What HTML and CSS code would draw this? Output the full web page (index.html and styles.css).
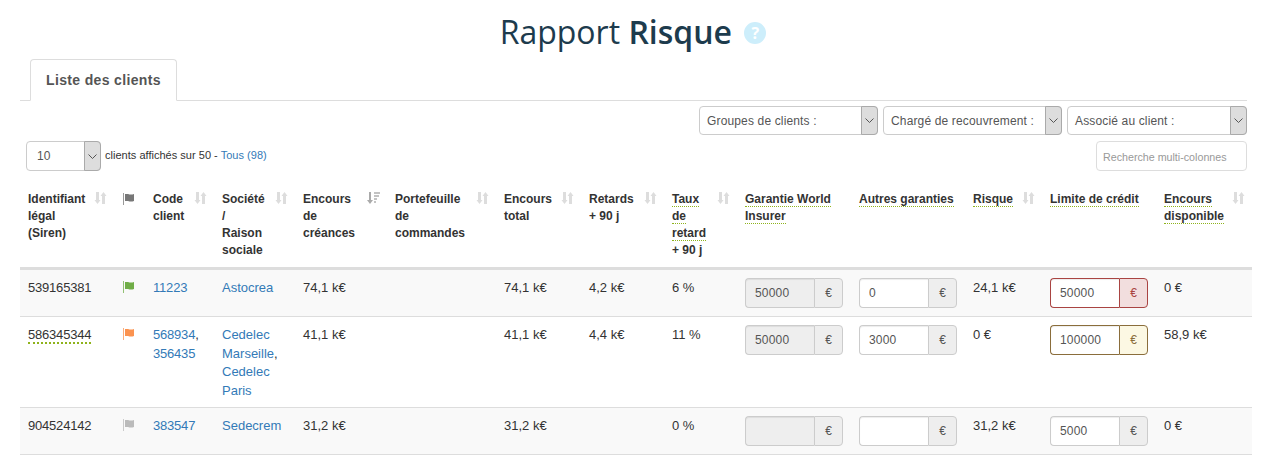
FILE: index.html
```html
<!DOCTYPE html>
<html lang="fr">
<head>
    <meta charset="UTF-8">
    <title>Rapport Risque</title>
    <link rel="stylesheet" href="styles.css">
</head>
<body>
    <svg class="defs" width="0" height="0">
        <symbol id="sort" viewBox="0 0 13 12">
            <path d="M2 0h3v8h1.500l-3 4-3-4H2zM8 12h3V4h1.500l-3-4-3 4H8z" fill="currentColor"/>
        </symbol>
        <symbol id="sort-active" viewBox="0 0 13 12">
            <path d="M2 0h2v8h2l-3 4-3-4h2z" fill="currentColor"/>
            <path d="M7 0h6v2H7zM7 3h5v2H7zM7 6h3v2H7zM7 9h2v2H7z" fill="currentColor" opacity="0.7"/>
        </symbol>
        <symbol id="flag" viewBox="0 0 13 12">
            <path d="M1 0h1v12H1z" fill="currentColor" opacity="0.75"/>
            <path d="M3 1h3l1.500 0.500h3L12 1v7l-1.500 0.500h-3L6 8H3z" fill="currentColor"/>
        </symbol>
        <symbol id="chevron" viewBox="0 0 9 5">
            <path d="M0.500 0.500l4 4 4-4" fill="none" stroke="currentColor" stroke-width="1"/>
        </symbol>
    </svg>

    <h1 class="page-title">Rapport <strong>Risque</strong> <span class="help-badge">?</span></h1>

    <div class="page">
        <div class="tabs">
            <div class="tab">Liste des clients</div>
        </div>

        <div class="filters">
            <div class="select-box"><span class="select-label">Groupes de clients :</span><span class="select-arrow"><svg><use href="#chevron"/></svg></span></div>
            <div class="select-box"><span class="select-label">Chargé de recouvrement :</span><span class="select-arrow"><svg><use href="#chevron"/></svg></span></div>
            <div class="select-box select-wide"><span class="select-label">Associé au client :</span><span class="select-arrow"><svg><use href="#chevron"/></svg></span></div>
        </div>

        <div class="toolbar">
            <div class="length">
                <div class="select-box select-small"><span class="select-label">10</span><span class="select-arrow"><svg><use href="#chevron"/></svg></span></div>
                <span class="length-text">clients affichés sur 50 - <a href="#">Tous (98)</a></span>
            </div>
            <input class="search" type="text" placeholder="Recherche multi-colonnes">
        </div>

        <table class="risk-table">
            <colgroup>
                <col class="col-siren"><col class="col-flag"><col class="col-code"><col class="col-company">
                <col class="col-due"><col class="col-orders"><col class="col-total"><col class="col-late">
                <col class="col-rate"><col class="col-amount"><col class="col-amount"><col class="col-risk">
                <col class="col-amount"><col class="col-free">
            </colgroup>
            <thead>
                <tr>
                    <th><div class="th-in"><span>Identifiant<br>légal<br>(Siren)</span><svg class="sort"><use href="#sort"/></svg></div></th>
                    <th><svg class="flag flag-head"><use href="#flag"/></svg></th>
                    <th><div class="th-in"><span>Code<br>client</span><svg class="sort"><use href="#sort"/></svg></div></th>
                    <th><div class="th-in"><span>Société<br>/<br>Raison<br>sociale</span><svg class="sort"><use href="#sort"/></svg></div></th>
                    <th><div class="th-in"><span>Encours<br>de<br>créances</span><svg class="sort sort-on"><use href="#sort-active"/></svg></div></th>
                    <th><div class="th-in"><span>Portefeuille<br>de<br>commandes</span><svg class="sort"><use href="#sort"/></svg></div></th>
                    <th><div class="th-in"><span>Encours<br>total</span><svg class="sort"><use href="#sort"/></svg></div></th>
                    <th><div class="th-in"><span>Retards<br>+ 90 j</span><svg class="sort"><use href="#sort"/></svg></div></th>
                    <th><div class="th-in"><span><span class="hint">Taux</span><br><span class="hint">de</span><br><span class="hint">retard</span><br>+ 90 j</span><svg class="sort"><use href="#sort"/></svg></div></th>
                    <th><span class="hint">Garantie World</span><br><span class="hint">Insurer</span></th>
                    <th><span class="hint">Autres garanties</span></th>
                    <th><div class="th-in"><span><span class="hint">Risque</span></span><svg class="sort"><use href="#sort"/></svg></div></th>
                    <th><span class="hint">Limite de crédit</span></th>
                    <th><div class="th-in"><span><span class="hint">Encours</span><br><span class="hint">disponible</span></span><svg class="sort"><use href="#sort"/></svg></div></th>
                </tr>
            </thead>
            <tbody>
                <tr>
                    <td class="num">539165381</td>
                    <td><svg class="flag flag-green"><use href="#flag"/></svg></td>
                    <td class="num"><a href="#">11223</a></td>
                    <td><a href="#">Astocrea</a></td>
                    <td>74,1 k€</td>
                    <td></td>
                    <td>74,1 k€</td>
                    <td>4,2 k€</td>
                    <td>6 %</td>
                    <td><div class="amount"><input value="50000" disabled><span>€</span></div></td>
                    <td><div class="amount"><input value="0"><span>€</span></div></td>
                    <td>24,1 k€</td>
                    <td><div class="amount amount-error"><input value="50000"><span>€</span></div></td>
                    <td>0 €</td>
                </tr>
                <tr>
                    <td class="num"><span class="hint-strong">586345344</span></td>
                    <td><svg class="flag flag-orange"><use href="#flag"/></svg></td>
                    <td class="num"><a href="#">568934</a>,<br><a href="#">356435</a></td>
                    <td><a href="#">Cedelec<br>Marseille</a>,<br><a href="#">Cedelec<br>Paris</a></td>
                    <td>41,1 k€</td>
                    <td></td>
                    <td>41,1 k€</td>
                    <td>4,4 k€</td>
                    <td>11 %</td>
                    <td><div class="amount"><input value="50000" disabled><span>€</span></div></td>
                    <td><div class="amount"><input value="3000"><span>€</span></div></td>
                    <td>0 €</td>
                    <td><div class="amount amount-warning"><input value="100000"><span>€</span></div></td>
                    <td>58,9 k€</td>
                </tr>
                <tr>
                    <td class="num">904524142</td>
                    <td><svg class="flag flag-grey"><use href="#flag"/></svg></td>
                    <td class="num"><a href="#">383547</a></td>
                    <td><a href="#">Sedecrem</a></td>
                    <td>31,2 k€</td>
                    <td></td>
                    <td>31,2 k€</td>
                    <td></td>
                    <td>0 %</td>
                    <td><div class="amount"><input value="" disabled><span>€</span></div></td>
                    <td><div class="amount"><input value=""><span>€</span></div></td>
                    <td>31,2 k€</td>
                    <td><div class="amount"><input value="5000"><span>€</span></div></td>
                    <td>0 €</td>
                </tr>
            </tbody>
        </table>
    </div>
</body>
</html>
```

FILE: styles.css
```css
* {
    box-sizing: border-box;
}

body {
    margin: 0;
    background: #fff;
    color: #333;
    font-family: "Liberation Sans", Arial, sans-serif;
    font-size: 13px;
    line-height: 1.42857;
}

a {
    color: #337ab7;
    text-decoration: none;
}

.defs {
    position: absolute;
}

.page-title {
    margin: 0;
    height: 59px;
    padding: 10px 1px 0 0;
    text-align: center;
    font-family: "Open Sans", sans-serif;
    font-size: 32px;
    font-weight: 400;
    line-height: 44px;
    color: #1d3b4d;
}

.page-title strong {
    font-weight: 600;
}

.help-badge {
    display: inline-block;
    width: 22px;
    height: 22px;
    margin-left: 4px;
    border-radius: 50%;
    background: #cdeefb;
    color: #fff;
    font-size: 16px;
    font-weight: 700;
    line-height: 22px;
    text-align: center;
    vertical-align: 5px;
}

.page {
    padding: 0 15px 0 20px;
}

.tabs {
    display: flex;
    height: 42px;
    margin-right: 5px;
    padding-left: 10px;
    border-bottom: 1px solid #ddd;
}

.tab {
    height: 42px;
    padding: 11px 15px 0;
    border: 1px solid #ddd;
    border-bottom-color: #fff;
    border-radius: 4px 4px 0 0;
    background: #fff;
    color: #555;
    font-size: 14px;
    font-weight: 700;
    letter-spacing: 0.35px;
}

.filters {
    display: flex;
    justify-content: flex-end;
    gap: 5px;
    margin: 5px 5px 0 0;
}

.select-box {
    display: flex;
    justify-content: space-between;
    width: 179px;
    height: 29px;
    border: 1px solid #ccc;
    border-radius: 4px;
    background: #fff;
    color: #555;
    font-size: 12px;
    line-height: 28px;
}

.select-wide {
    width: 180px;
}

.select-label {
    padding-left: 7px;
    letter-spacing: 0.15px;
}

.select-arrow {
    display: flex;
    align-items: center;
    justify-content: center;
    width: 17px;
    margin: -1px -1px -1px 0;
    border: 1px solid #aaa;
    border-radius: 0 4px 4px 0;
    background: #ddd;
    color: #555;
}

.select-arrow svg {
    width: 9px;
    height: 5px;
}

.toolbar {
    display: flex;
    justify-content: space-between;
    align-items: center;
    margin: 6px 5px 0 6px;
}

.length {
    display: flex;
    align-items: center;
    gap: 4px;
}

.select-small {
    width: 75px;
    height: 30px;
    line-height: 29px;
}

.select-small .select-label {
    padding-left: 10px;
}

.length-text {
    font-size: 11px;
    letter-spacing: 0.02px;
}

.search {
    width: 151px;
    height: 30px;
    padding: 1px 6px 0;
    border: 1px solid #ddd;
    border-radius: 4px;
    font-family: inherit;
    font-size: 10.700px;
}

.search::placeholder {
    color: #999;
}

.risk-table {
    width: 1232px;
    margin-top: 12px;
    border-collapse: collapse;
    table-layout: fixed;
}

.col-siren { width: 94px; }
.col-flag { width: 31px; }
.col-code { width: 69px; }
.col-company { width: 81px; }
.col-due { width: 92px; }
.col-orders { width: 109px; }
.col-total { width: 85px; }
.col-late { width: 83px; }
.col-rate { width: 73px; }
.col-amount { width: 114px; }
.col-risk { width: 77px; }
.col-free { width: 96px; }

.risk-table th {
    padding: 8px 0 8px 8px;
    border-bottom: 3px solid #ddd;
    font-size: 12px;
    font-weight: 700;
    line-height: 17px;
    text-align: left;
    vertical-align: top;
}

.risk-table td {
    padding: 9px 0 7px 8px;
    border-bottom: 1px solid #ddd;
    vertical-align: top;
    white-space: nowrap;
}

.risk-table td.num {
    letter-spacing: -0.2px;
}

.risk-table tbody tr:nth-child(odd) {
    background: #f9f9f9;
}

.th-in {
    display: flex;
    justify-content: space-between;
    padding-right: 7px;
}

.sort {
    flex: none;
    width: 13px;
    height: 12px;
    margin-top: 1px;
    color: #ddd;
}

.sort-on {
    color: #aaa;
}

.hint {
    border-bottom: 1px dotted #8fb31c;
}

.hint-strong {
    border-bottom: 2px dotted #8fb31c;
}

.flag {
    display: block;
    width: 13px;
    height: 12px;
    margin-top: 2px;
}

.flag-head {
    margin-top: 2px;
    color: #777;
}

.flag-green {
    color: #70ad47;
}

.flag-orange {
    color: #fb9350;
}

.flag-grey {
    color: #bbb;
}

.amount {
    display: flex;
    width: 98px;
    height: 30px;
    margin: -1px 0 1px;
}

.amount input {
    width: 69px;
    height: 30px;
    padding: 0 9px;
    border: 1px solid #ccc;
    border-right: 0;
    border-radius: 4px 0 0 4px;
    background: #fff;
    box-shadow: inset 0 1px 1px rgba(0, 0, 0, 0.075);
    color: #555;
    font-family: inherit;
    font-size: 12px;
    letter-spacing: 0.2px;
    outline: none;
}

.amount input:disabled {
    background: #eee;
    color: #555;
}

.amount span {
    width: 29px;
    border: 1px solid #ccc;
    border-radius: 0 4px 4px 0;
    background: #eee;
    color: #555;
    font-size: 12px;
    line-height: 28px;
    text-align: center;
}

.amount-error input,
.amount-error span {
    border-color: #a94442;
}

.amount-error span {
    background: #f2dede;
    color: #a94442;
}

.amount-warning input,
.amount-warning span {
    border-color: #8a6d3b;
}

.amount-warning span {
    background: #fcf8e3;
    color: #8a6d3b;
}
```
